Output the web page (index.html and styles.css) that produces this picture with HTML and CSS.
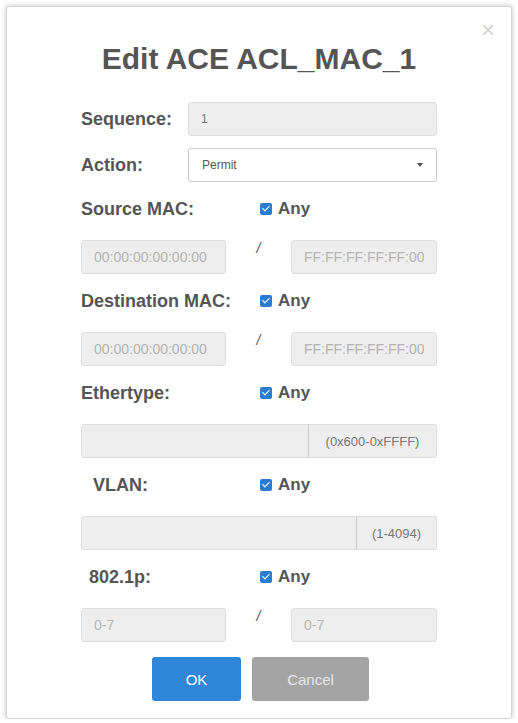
FILE: index.html
```html
<!DOCTYPE html>
<html lang="en">
<head>
  <meta charset="UTF-8">
  <meta name="viewport" content="width=device-width, initial-scale=1.0">
  <title>Edit ACE ACL_MAC_1</title>
  <link rel="stylesheet" href="styles.css">
</head>
<body>
  <div class="modal">
    <span class="close">&times;</span>
    <h1 class="modal-title">Edit ACE ACL_MAC_1</h1>
    <form class="ace-form">
      <div class="row">
        <label class="label" for="sequence">Sequence:</label>
        <input class="control small" id="sequence" type="text" value="1" disabled>
      </div>
      <div class="row">
        <label class="label" for="action">Action:</label>
        <div class="select">
          <span>Permit</span>
          <span class="caret"></span>
        </div>
      </div>

      <div class="check-row">
        <span class="label wide">Source MAC:</span>
        <span class="any"><span class="box"></span>Any</span>
      </div>
      <div class="row pair">
        <input class="control" type="text" placeholder="00:00:00:00:00:00" disabled>
        <span class="slash">/</span>
        <input class="control" type="text" placeholder="FF:FF:FF:FF:FF:00" disabled>
      </div>

      <div class="check-row">
        <span class="label wide">Destination MAC:</span>
        <span class="any"><span class="box"></span>Any</span>
      </div>
      <div class="row pair">
        <input class="control" type="text" placeholder="00:00:00:00:00:00" disabled>
        <span class="slash">/</span>
        <input class="control" type="text" placeholder="FF:FF:FF:FF:FF:00" disabled>
      </div>

      <div class="check-row">
        <span class="label wide">Ethertype:</span>
        <span class="any"><span class="box"></span>Any</span>
      </div>
      <div class="row group">
        <input class="control" type="text" disabled>
        <span class="addon addon-hex">(0x600-0xFFFF)</span>
      </div>

      <div class="check-row">
        <span class="label wide indent-vlan">VLAN:</span>
        <span class="any"><span class="box"></span>Any</span>
      </div>
      <div class="row group">
        <input class="control" type="text" disabled>
        <span class="addon addon-vlan">(1-4094)</span>
      </div>

      <div class="check-row">
        <span class="label wide indent-pri">802.1p:</span>
        <span class="any"><span class="box"></span>Any</span>
      </div>
      <div class="row pair">
        <input class="control" type="text" placeholder="0-7" disabled>
        <span class="slash">/</span>
        <input class="control" type="text" placeholder="0-7" disabled>
      </div>

      <div class="buttons">
        <button type="button" class="btn btn-ok">OK</button>
        <button type="button" class="btn btn-cancel">Cancel</button>
      </div>
    </form>
  </div>
</body>
</html>
```

FILE: styles.css
```css
body {
  margin: 0;
  background: #fff;
  font-family: 'Liberation Sans', Arial, sans-serif;
  color: #555;
}
.modal {
  position: relative;
  box-sizing: border-box;
  width: 506px;
  height: 713px;
  margin: 6px 0 0 6px;
  padding: 32px 74px 0;
  background: #fff;
  border: 1px solid #d6d6d6;
  border-radius: 3px;
  box-shadow: 0 0 5px rgba(0, 0, 0, 0.25);
}
.close {
  position: absolute;
  top: 9px;
  right: 16px;
  font-size: 24px;
  font-weight: 300;
  color: #d4d4d4;
}
.modal-title {
  margin: 0 0 23px;
  height: 40px;
  line-height: 40px;
  text-align: center;
  font-size: 30px;
  font-weight: bold;
  color: #555;
}
.ace-form {
  display: flex;
  flex-direction: column;
}
.row {
  display: flex;
  align-items: center;
  height: 34px;
  margin-bottom: 12px;
}
.label {
  flex: 0 0 107px;
  font-size: 18px;
  font-weight: bold;
  color: #555;
}
.label.wide {
  flex-basis: 179px;
}
.indent-vlan {
  box-sizing: border-box;
  padding-left: 12px;
}
.indent-pri {
  box-sizing: border-box;
  padding-left: 8px;
}
.control {
  box-sizing: border-box;
  flex: 1;
  min-width: 0;
  height: 34px;
  padding: 0 12px;
  font-family: inherit;
  font-size: 14px;
  color: #777;
  background: #eee;
  border: 1px solid #ddd;
  border-radius: 3px;
}
.control.small {
  font-size: 12px;
}
.control::placeholder {
  color: #b4b4b4;
}
.select {
  box-sizing: border-box;
  flex: 1;
  height: 34px;
  display: flex;
  align-items: center;
  justify-content: space-between;
  padding: 0 13px;
  font-size: 12px;
  color: #555;
  background: #fff;
  border: 1px solid #ccc;
  border-radius: 3px;
}
.caret {
  width: 0;
  height: 0;
  border-left: 3px solid transparent;
  border-right: 3px solid transparent;
  border-top: 4px solid #555;
}
.check-row {
  display: flex;
  align-items: center;
  height: 30px;
  margin-bottom: 16px;
}
.any {
  display: flex;
  align-items: center;
  gap: 6px;
  font-size: 17px;
  font-weight: bold;
  color: #555;
}
.box {
  position: relative;
  width: 12px;
  height: 12px;
  background: #2c7bd2;
  border-radius: 2px;
}
.box::after {
  content: "";
  position: absolute;
  left: 4px;
  top: 1px;
  width: 3px;
  height: 6px;
  border: solid #fff;
  border-width: 0 1.5px 1.5px 0;
  transform: rotate(45deg);
}
.pair .control:first-child {
  flex: 0 0 145px;
}
.pair .control:last-child {
  flex: 0 0 146px;
}
.slash {
  flex: 1;
  align-self: flex-start;
  padding-top: 0;
  text-align: center;
  font-size: 14px;
  font-style: italic;
  color: #555;
}
.group .control {
  border-radius: 3px 0 0 3px;
}
.addon {
  box-sizing: border-box;
  height: 34px;
  display: flex;
  align-items: center;
  justify-content: center;
  font-size: 13px;
  color: #777;
  background: #eee;
  border: 1px solid #ddd;
  border-left-color: #ccc;
  border-radius: 0 3px 3px 0;
  margin-left: -1px;
}
.addon-hex {
  flex: 0 0 129px;
}
.addon-vlan {
  flex: 0 0 81px;
}
.buttons {
  display: flex;
  justify-content: center;
  gap: 11px;
  margin-top: 3px;
  padding-left: 3px;
}
.btn {
  height: 44px;
  border: none;
  border-radius: 3px;
  font-family: inherit;
  font-size: 15px;
}
.btn-ok {
  width: 89px;
  background: #2f86d8;
  color: #fff;
}
.btn-cancel {
  width: 117px;
  background: #a4a4a4;
  color: #e6e6e6;
}
```
